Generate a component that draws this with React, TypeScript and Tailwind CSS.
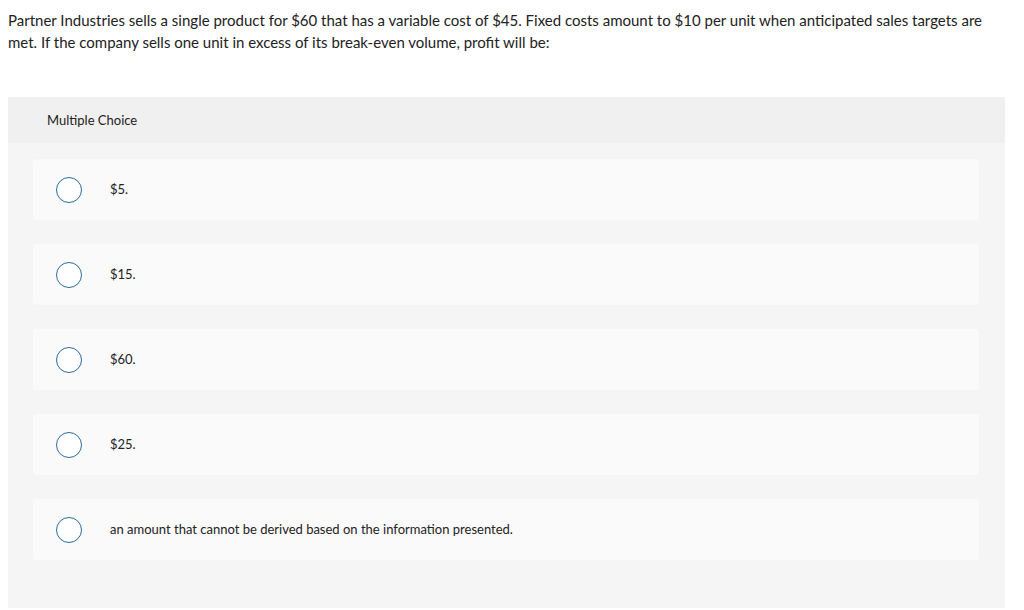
const OPTIONS = [
  '$5.',
  '$15.',
  '$60.',
  '$25.',
  'an amount that cannot be derived based on the information presented.',
]

export default function App() {
  return (
    <div className="min-h-[610px] bg-white font-['Lato',sans-serif] text-[#222]">
      {/* Question stem */}
      <div className="pl-2 pr-[24px] pt-[9px] text-[15px] leading-[22px]">
        Partner Industries sells a single product for $60 that has a variable cost of $45. Fixed costs amount to $10 per unit when
        anticipated sales targets are met. If the company sells one unit in excess of its break-even volume, profit will be:
      </div>

      {/* Answer panel */}
      <div className="ml-2 mr-[19px] mt-[44px] bg-[#f5f5f5] pb-[48px]">
        <div className="flex h-[46px] items-center bg-[#f0f0f0] px-[39px] pt-[2px] text-[13px] text-[#222]">
          Multiple Choice
        </div>
        <div className="flex flex-col gap-6 px-[25px] pt-4 pr-[26px]">
          {OPTIONS.map((opt) => (
            <div key={opt} className="flex h-[61px] items-center rounded-[2px] bg-[#fafafa] pl-[23px]">
              <span className="h-[26px] w-[26px] shrink-0 rounded-full border border-[#2a6aa0] bg-white" />
              <span className="ml-[28px] pt-[1px] text-[13px] text-[#222]">{opt}</span>
            </div>
          ))}
        </div>
      </div>
    </div>
  )
}
